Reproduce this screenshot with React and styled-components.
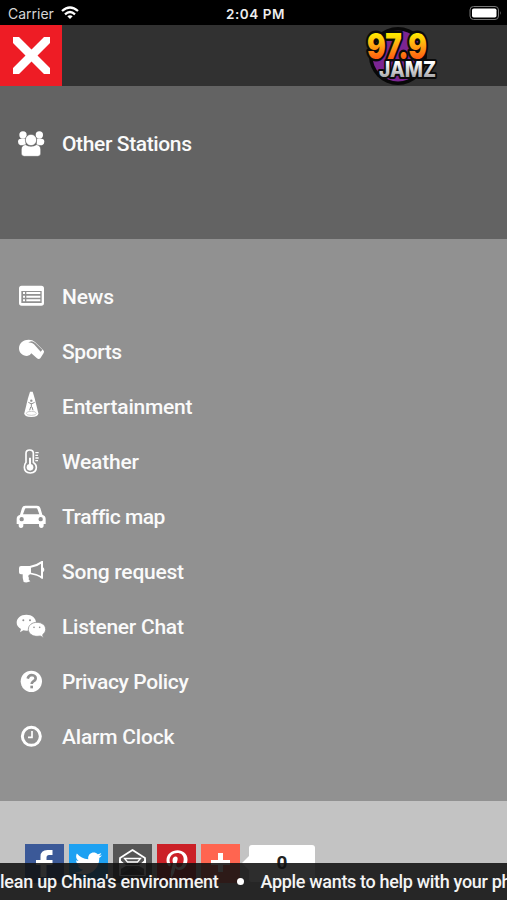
import styled, { createGlobalStyle } from 'styled-components';
import { FaTwitter, FaPinterestP } from 'react-icons/fa';

const GlobalStyle = createGlobalStyle`
  * {
    box-sizing: border-box;
  }

  body {
    margin: 0;
    overflow: hidden;
    background: #c3c3c3;
    font-family: Roboto, 'Liberation Sans', sans-serif;
  }
`;

const Screen = styled.div`
  position: relative;
  display: flex;
  flex-direction: column;
  width: 507px;
  height: 900px;
  overflow: hidden;
  background: #c3c3c3;
`;

const StatusBar = styled.div`
  display: grid;
  grid-template-columns: 1fr auto 1fr;
  align-items: center;
  height: 25px;
  padding: 2px 5px 0 8px;
  background: #000;
  color: #ededed;
  font-family: Inter, 'Liberation Sans', sans-serif;
  font-size: 13.5px;
`;

const Carrier = styled.div`
  display: flex;
  align-items: center;
  gap: 7px;
  color: #d6d6d6;
  font-size: 14px;

  svg {
    margin-bottom: 2px;
  }
`;

const Time = styled.div`
  padding-left: 1px;
  font-weight: 600;
  letter-spacing: 0.55px;
`;

const Battery = styled.svg`
  justify-self: end;
  margin-bottom: 1px;
`;

const Header = styled.header`
  display: flex;
  height: 61px;
  background: #313131;
`;

const CloseButton = styled.button`
  width: 62px;
  height: 61px;
  padding: 0;
  border: 0;
  background: #ee1c25;

  svg {
    display: block;
  }
`;

const Logo = styled.svg`
  margin-left: 302px;
`;

const Panel = styled.section`
  height: ${(p) => p.$height}px;
  padding-top: 30px;
  background: ${(p) => p.$color};
`;

const MenuItem = styled.div`
  display: flex;
  align-items: center;
  height: 55px;
  padding-left: 15px;
  color: #fafafa;
  font-size: 21px;
  font-weight: 500;
  white-space: nowrap;

  svg {
    flex: none;
    margin: 0 15px 1px 0;
  }
`;

const Label = styled.span`
  letter-spacing: ${(p) => p.$spacing}px;
`;

const Share = styled.div`
  display: flex;
  gap: 5px;
  padding: 43px 0 0 25px;
`;

const ShareButton = styled.div`
  display: flex;
  align-items: center;
  justify-content: center;
  width: 39px;
  height: 39px;
  background: ${(p) => p.$color};
  color: #fff;
`;

const Count = styled.div`
  position: relative;
  width: 66px;
  height: 37px;
  margin: 1px 0 0 4px;
  border-radius: 3px;
  background: #fff;
  color: #222;
  font-size: 19px;
  font-weight: 700;
  line-height: 35px;
  text-align: center;

  &::before {
    content: '';
    position: absolute;
    left: -7px;
    top: 11px;
    border: 7px solid transparent;
    border-right-color: #fff;
    border-left: 0;
  }
`;

const Ticker = styled.div`
  position: absolute;
  left: 0;
  right: 0;
  bottom: 0;
  display: flex;
  align-items: center;
  height: 37px;
  background: rgba(16, 16, 16, 0.88);
  color: #f4f4f4;
  font-size: 18px;
  font-weight: 500;
  white-space: nowrap;
  overflow: hidden;
`;

const Dot = styled.i`
  flex: none;
  width: 7px;
  height: 7px;
  margin: 0 17px 0 18px;
  border-radius: 50%;
  background: #fff;
`;

// every menu glyph is drawn on a 96 unit grid
const Glyph = ({ children }) => (
  <svg width="32" height="32" viewBox="0 0 96 96" fill="#fff">
    {children}
  </svg>
);

const PeopleIcon = () => (
  <Glyph>
    <circle cx="24" cy="24" r="11" />
    <circle cx="73" cy="24" r="11" />
    <path d="M9 44q0-9 9-9h14v20H16q-7-3-7-11zM88 44q0-9-9-9H65v20h16q7-3 7-11z" />
    <path d="M19 68q0-14 13-15 7 5 16 5t16-5q13 1 13 15v11q0 9-9 9H28q-9 0-9-9z" stroke="#636363" strokeWidth="1.500" />
    <circle cx="48" cy="39" r="17" stroke="#636363" strokeWidth="2" />
  </Glyph>
);

const NewsIcon = () => (
  <Glyph>
    <path fillRule="evenodd" d="M20 17h59q8 0 8 8v44q0 8-8 8H20q-8 0-8-8V25q0-8 8-8zM19 33v36h61V33z" />
    <path d="M24 36h6v6h-6zM24 47h6v6h-6zM24 58h6v6h-6zM34 36h42v6H34zM34 47h42v6H34zM34 58h42v6H34z" />
  </Glyph>
);

const WhistleIcon = () => (
  <Glyph>
    <path d="M12 40C12 24 26 14 41 14q12 0 19 7l25 25q4 4 1 8L76 70q-5 4-11-1L49 55q-4 8-13 8C21 63 12 52 12 40z" />
    <path d="M40 23q10-2 17 5l20 22 5-6-21-20q-8-7-17-4z" fill="#919191" />
  </Glyph>
);

const SpotlightIcon = () => (
  <Glyph>
    <path d="M45 5h8l6 20 11 45q1 11-21 11T28 70l11-45z" />
    <circle cx="49" cy="32" r="3.500" fill="#919191" />
    <path d="M40 37l8 4h3l8-4M49 41v11M47 51l-3 10M51 51l3 10" stroke="#919191" strokeWidth="3" fill="none" />
    <ellipse cx="49" cy="70" rx="15" ry="6" fill="none" stroke="#b4b4b4" strokeWidth="2" />
  </Glyph>
);

const WeatherIcon = () => (
  <Glyph>
    <path d="M33 52V25q0-10 11-10t11 10v27q9 6 9 15 0 16-18 17-18-1-18-17 0-9 5-15z" fill="none" stroke="#fff" strokeWidth="5" />
    <circle cx="45" cy="67" r="10" />
    <path d="M42 38h6v24h-6zM61 21h10v4H61zM61 29h8v4h-8zM61 37h10v4H61zM61 45h8v4h-8z" />
  </Glyph>
);

const CarIcon = () => (
  <Glyph>
    <path fillRule="evenodd" d="M31 17h35q8 0 10 7l6 20q10 3 10 13v15h-6v4q0 8-7 8t-7-8v-4H25v4q0 8-7 8t-7-8v-4H5V57q0-10 10-13l6-20q2-7 10-7zM33 25q-3 0-4 4l-5 14h49l-5-14q-1-4-4-4zM20 51a6.500 6.500 0 1 0 0 13 6.500 6.500 0 1 0 0-13zM77 51a6.500 6.500 0 1 0 0 13 6.500 6.500 0 1 0 0-13z" />
  </Glyph>
);

const MegaphoneIcon = () => (
  <Glyph>
    <path fillRule="evenodd" d="M18 33h26q21-4 36-15h4v19q4 2 4 7t-4 7v20h-4Q67 61 46 58l-5 2q-3 4 1 9-3 4 1 7l3 3q-10 5-20 2-4-12-3-23h-5q-6 0-6-6V39q0-6 6-6zM48 38v15q17 2 30 10V26Q66 36 48 38z" />
  </Glyph>
);

const ChatIcon = () => (
  <Glyph>
    <path d="M34 14c17 0 29 10 29 24S51 62 34 62l-9-1-10 6 3-10C10 52 5 46 5 38c0-14 12-24 29-24z" />
    <path d="M66 37c15 0 26 9 26 21 0 7-4 12-9 16l2 9-9-5-10 1c-15 0-26-9-26-21s11-21 26-21z" stroke="#919191" strokeWidth="2.500" />
    <g fill="#919191">
      <circle cx="25" cy="31" r="3" />
      <circle cx="45" cy="31" r="3" />
      <circle cx="57" cy="52" r="2.500" />
      <circle cx="74" cy="52" r="2.500" />
    </g>
  </Glyph>
);

const HelpIcon = () => (
  <Glyph>
    <circle cx="49" cy="49" r="32" />
    <path d="M38 41q3-11 12-11 12 1 12 10 0 6-7 9-5 3-5 8" fill="none" stroke="#919191" strokeWidth="8" />
    <path d="M46 62h8v8h-8z" fill="#919191" />
  </Glyph>
);

const ClockIcon = () => (
  <Glyph>
    <circle cx="49" cy="49" r="27" fill="none" stroke="#fff" strokeWidth="9" />
    <path d="M51 33v19H39" fill="none" stroke="#fff" strokeWidth="5" />
  </Glyph>
);

const items = [
  { label: 'News', icon: NewsIcon, spacing: -0.15 },
  { label: 'Sports', icon: WhistleIcon, spacing: -0.4 },
  { label: 'Entertainment', icon: SpotlightIcon, spacing: -0.23 },
  { label: 'Weather', icon: WeatherIcon, spacing: -0.2 },
  { label: 'Traffic map', icon: CarIcon, spacing: -0.48 },
  { label: 'Song request', icon: MegaphoneIcon, spacing: -0.22 },
  { label: 'Listener Chat', icon: ChatIcon, spacing: -0.26 },
  { label: 'Privacy Policy', icon: HelpIcon, spacing: -0.36 },
  { label: 'Alarm Clock', icon: ClockIcon, spacing: -0.2 },
];

function StationLogo() {
  return (
    <Logo width="76" height="61" viewBox="0 0 76 61">
      <defs>
        <linearGradient id="fire" gradientUnits="userSpaceOnUse" x1="0" y1="7" x2="0" y2="34">
          <stop offset="0.1" stopColor="#ffe600" />
          <stop offset="0.5" stopColor="#ffa612" />
          <stop offset="1" stopColor="#ff5a10" />
        </linearGradient>
        <linearGradient id="steel" gradientUnits="userSpaceOnUse" x1="0" y1="36" x2="0" y2="52">
          <stop offset="0.1" stopColor="#fff" />
          <stop offset="1" stopColor="#a9a9ad" />
        </linearGradient>
      </defs>
      <circle cx="34" cy="31" r="29" fill="#080808" />
      <circle cx="34" cy="31" r="25.500" fill="#7b2592" />
      <g fontFamily="Inter, sans-serif" fontWeight="900" paintOrder="stroke" stroke="#0a0a0a" strokeLinejoin="round">
        <text x="3" y="33.500" fontSize="35" textLength="60" lengthAdjust="spacingAndGlyphs" fill="url(#fire)" strokeWidth="5">97.9</text>
        <text x="15" y="51.500" fontSize="21.500" fontWeight="800" textLength="57" lengthAdjust="spacingAndGlyphs" fill="url(#steel)" strokeWidth="4">JAMZ</text>
      </g>
    </Logo>
  );
}

function App() {
  return (
    <>
      <GlobalStyle />
      <Screen>
        <StatusBar>
          <Carrier>
            Carrier
            <svg width="18" height="14" viewBox="0 0 18 14" fill="none" stroke="#fff" strokeWidth="2.300">
              <path d="M1 5q8-7 16 0M4 8.300q5-4.500 10 0" />
              <path d="M6.300 10.300q2.700-2.300 5.400 0L9 13z" fill="#fff" stroke="none" />
            </svg>
          </Carrier>
          <Time>2:04 PM</Time>
          <Battery width="33" height="16" viewBox="0 0 33 16">
            <rect x="1" y="1.500" width="28.500" height="13" rx="3.500" fill="none" stroke="#777" />
            <rect x="3" y="3.500" width="24.500" height="9" rx="1.800" fill="#fff" />
            <path d="M31 6q1.500 2 0 4z" fill="#777" />
          </Battery>
        </StatusBar>

        <Header>
          <CloseButton aria-label="Close">
            <svg width="62" height="61" viewBox="0 0 62 61" fill="#fff">
              <path d="M13 12h6l12.500 12.500L44 12h6v6L37.500 30.500 50 43v6h-6L31.500 36.500 19 49h-6v-6l12.500-12.500L13 18z" />
            </svg>
          </CloseButton>
          <StationLogo />
        </Header>

        <Panel $height={153} $color="#636363">
          <MenuItem>
            <PeopleIcon />
            <Label $spacing={-0.37}>Other Stations</Label>
          </MenuItem>
        </Panel>

        <Panel $height={562} $color="#919191">
          {items.map(({ label, icon: Icon, spacing }) => (
            <MenuItem key={label}>
              <Icon />
              <Label $spacing={spacing}>{label}</Label>
            </MenuItem>
          ))}
        </Panel>

        <Share>
          <ShareButton $color="#3b5998">
            <svg width="39" height="39" viewBox="0 0 39 39" fill="#fff">
              <path d="M27.500 6v5H24q-2.500 0-2.500 2.500V16h6v5h-6v12h-6V21H11v-5h4.500v-3.500q0-6.500 7-6.500z" />
            </svg>
          </ShareButton>
          <ShareButton $color="#1da1f2"><FaTwitter size={27} /></ShareButton>
          <ShareButton $color="#555">
            <svg width="39" height="39" viewBox="0 0 39 39">
              <path d="M7 14l12.500-8L32 14v17H7z" fill="none" stroke="#fff" strokeWidth="1.800" strokeLinejoin="round" />
              <path d="M6 15l7 6h13l7-6v11l-7-4H13l-7 4z" fill="#fff" />
              <path d="M11.500 14.500h16l-3 3.500h-10z" fill="none" stroke="#fff" strokeWidth="1.300" />
              <path d="M7 31l12.500-8L32 31z" fill="#333" />
            </svg>
          </ShareButton>
          <ShareButton $color="#cb2027"><FaPinterestP size={28} /></ShareButton>
          <ShareButton $color="#ff6550">
            <svg width="39" height="39" viewBox="0 0 39 39" fill="#fff">
              <path d="M17 9h5v7h7v5h-7v7h-5v-7h-7v-5h7z" />
            </svg>
          </ShareButton>
          <Count>0</Count>
        </Share>

        <Ticker>
          <Label $spacing={-0.26}>lean up China's environment</Label>
          <Dot />
          <Label $spacing={-0.33}>Apple wants to help with your phone</Label>
        </Ticker>
      </Screen>
    </>
  );
}

export default App;
